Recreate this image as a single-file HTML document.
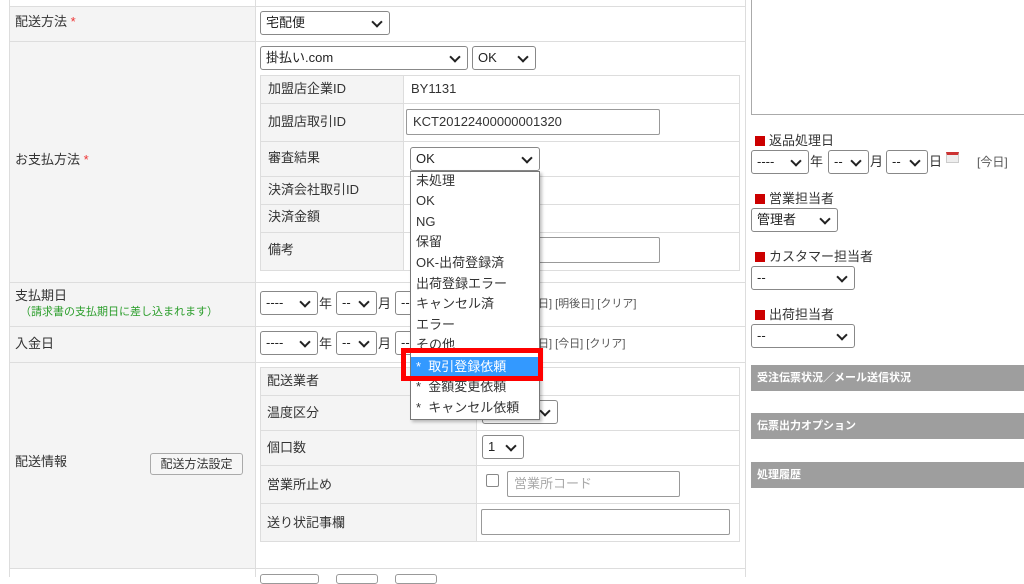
<!DOCTYPE html>
<html><head><meta charset="utf-8"><style>
*{box-sizing:border-box;margin:0;padding:0}
body{width:1024px;height:577px;overflow:hidden;background:#fff;font-family:"Liberation Sans","Noto Sans CJK JP",sans-serif;font-size:13px;color:#333;position:relative}
.a{position:absolute}
.lab{position:absolute;background:#f4f4f4}
.hl{position:absolute;height:1px;background:#ddd}
.vl{position:absolute;width:1px;background:#ddd}
.t{position:absolute;white-space:nowrap;line-height:16px}
.sel{position:absolute;border:1px solid #888;border-radius:3px;background:#fff;height:24px;line-height:22px;padding-left:5px;font-size:13px;color:#222}
.sel:after{content:"";position:absolute;right:8px;top:6px;width:6px;height:6px;border-right:2px solid #222;border-bottom:2px solid #222;transform:rotate(45deg)}
.inp{position:absolute;border:1px solid #999;border-radius:2px;background:#fff;height:26px;line-height:24px;padding-left:6px}
.req{color:#e33}
.sq{display:inline-block;width:10px;height:10px;background:#c00;margin-right:4px;vertical-align:-1px}
.bar{position:absolute;left:751px;width:273px;height:26px;background:#9e9e9e;color:#fff;font-weight:bold;font-size:11px;line-height:26px;padding-left:6px}
.sm{font-size:11px;color:#555}
.it{position:absolute;left:416px;line-height:16px;white-space:nowrap}
</style></head><body>
<div class="lab" style="left:9px;top:6px;width:246px;height:562px"></div>
<div class="vl" style="left:9px;top:0;height:577px"></div>
<div class="vl" style="left:255px;top:0;height:577px"></div>
<div class="vl" style="left:745px;top:0;height:577px"></div>
<div class="hl" style="left:9px;top:6px;width:736px"></div>
<div class="hl" style="left:9px;top:41px;width:736px"></div>
<div class="hl" style="left:9px;top:282px;width:736px"></div>
<div class="hl" style="left:9px;top:326px;width:736px"></div>
<div class="hl" style="left:9px;top:362px;width:736px"></div>
<div class="hl" style="left:9px;top:568px;width:736px"></div>

<div class="t" style="left:15px;top:14px">配送方法 <span class="req">*</span></div>
<div class="sel" style="left:260px;top:11px;width:130px">宅配便</div>

<div class="t" style="left:15px;top:152px">お支払方法 <span class="req">*</span></div>
<div class="sel" style="left:260px;top:46px;width:208px">掛払い.com</div>
<div class="sel" style="left:472px;top:46px;width:64px">OK</div>

<div class="lab" style="left:260px;top:75px;width:143px;height:195px"></div>
<div class="a" style="left:260px;top:75px;width:480px;height:196px;border:1px solid #ddd"></div>
<div class="vl" style="left:403px;top:75px;height:196px"></div>
<div class="hl" style="left:260px;top:103px;width:480px"></div>
<div class="hl" style="left:260px;top:141px;width:480px"></div>
<div class="hl" style="left:260px;top:176px;width:480px"></div>
<div class="hl" style="left:260px;top:204px;width:480px"></div>
<div class="hl" style="left:260px;top:232px;width:480px"></div>
<div class="t" style="left:268px;top:81px">加盟店企業ID</div>
<div class="t" style="left:411px;top:81px">BY1131</div>
<div class="t" style="left:268px;top:114px">加盟店取引ID</div>
<div class="inp" style="left:406px;top:109px;width:254px">KCT20122400000001320</div>
<div class="t" style="left:268px;top:150px">審査結果</div>
<div class="sel" style="left:410px;top:147px;width:130px">OK</div>
<div class="t" style="left:268px;top:182px">決済会社取引ID</div>
<div class="t" style="left:268px;top:209px">決済金額</div>
<div class="t" style="left:268px;top:242px">備考</div>
<div class="inp" style="left:520px;top:237px;width:140px"></div>

<div class="t" style="left:15px;top:288px">支払期日</div>
<div class="t" style="left:20px;top:304px;font-size:11px;color:#2a9d2a">（請求書の支払期日に差し込まれます）</div>
<div class="sel" style="left:260px;top:291px;width:58px">----</div><div class="t" style="left:319px;top:296px">年</div>
<div class="sel" style="left:336px;top:291px;width:41px">--</div><div class="t" style="left:378px;top:296px">月</div>
<div class="sel" style="left:395px;top:291px;width:41px">--</div>
<div class="t sm" style="left:538px;top:296px">日] [明後日] [クリア]</div>

<div class="t" style="left:15px;top:336px">入金日</div>
<div class="sel" style="left:260px;top:331px;width:58px">----</div><div class="t" style="left:319px;top:336px">年</div>
<div class="sel" style="left:336px;top:331px;width:41px">--</div><div class="t" style="left:378px;top:336px">月</div>
<div class="sel" style="left:395px;top:331px;width:41px">--</div>
<div class="t sm" style="left:538px;top:336px">日] [今日] [クリア]</div>

<div class="t" style="left:15px;top:454px">配送情報</div>
<div class="a" style="left:150px;top:453px;width:93px;height:22px;border:1px solid #aaa;border-radius:3px;background:#f6f6f6;font-size:12px;line-height:20px;text-align:center">配送方法設定</div>

<div class="lab" style="left:260px;top:367px;width:216px;height:174px"></div>
<div class="a" style="left:260px;top:367px;width:480px;height:175px;border:1px solid #ddd"></div>
<div class="vl" style="left:476px;top:367px;height:175px"></div>
<div class="hl" style="left:260px;top:395px;width:480px"></div>
<div class="hl" style="left:260px;top:430px;width:480px"></div>
<div class="hl" style="left:260px;top:465px;width:480px"></div>
<div class="hl" style="left:260px;top:503px;width:480px"></div>
<div class="t" style="left:267px;top:373px">配送業者</div>
<div class="t" style="left:267px;top:405px">温度区分</div>
<div class="sel" style="left:482px;top:400px;width:76px"></div>
<div class="t" style="left:267px;top:440px">個口数</div>
<div class="sel" style="left:482px;top:435px;width:42px">1</div>
<div class="t" style="left:267px;top:477px">営業所止め</div>
<div class="a" style="left:486px;top:474px;width:13px;height:13px;border:1px solid #888;border-radius:2px"></div>
<div class="inp" style="left:507px;top:471px;width:173px;color:#aaa">営業所コード</div>
<div class="t" style="left:267px;top:515px">送り状記事欄</div>
<div class="inp" style="left:481px;top:509px;width:249px"></div>
<div class="a" style="left:260px;top:574px;width:59px;height:10px;border:1px solid #999;border-radius:3px"></div>
<div class="a" style="left:336px;top:574px;width:42px;height:10px;border:1px solid #999;border-radius:3px"></div>
<div class="a" style="left:395px;top:574px;width:42px;height:10px;border:1px solid #999;border-radius:3px"></div>

<div class="a" style="left:410px;top:171px;width:130px;height:249px;background:#fff;border:1px solid #777;box-shadow:2px 2px 3px rgba(0,0,0,.25)"></div>
<div class="it" style="top:173px">未処理</div>
<div class="it" style="top:193px">OK</div>
<div class="it" style="top:214px">NG</div>
<div class="it" style="top:234px">保留</div>
<div class="it" style="top:255px">OK-出荷登録済</div>
<div class="it" style="top:276px">出荷登録エラー</div>
<div class="it" style="top:296px">キャンセル済</div>
<div class="it" style="top:317px">エラー</div>
<div class="it" style="top:337px">その他</div>
<div class="a" style="left:411px;top:357px;width:128px;height:20px;background:#3399ff"></div>
<div class="it" style="top:359px;color:#fff">*&nbsp; 取引登録依頼</div>
<div class="it" style="top:379px">*&nbsp; 金額変更依頼</div>
<div class="it" style="top:400px">*&nbsp; キャンセル依頼</div>
<div class="a" style="left:401px;top:348px;width:142px;height:33px;border:5px solid #f00"></div>

<div class="a" style="left:751px;top:-2px;width:280px;height:117px;border:1px solid #aaa"></div>
<div class="t" style="left:755px;top:133px"><span class="sq"></span>返品処理日</div>
<div class="sel" style="left:751px;top:150px;width:58px">----</div><div class="t" style="left:810px;top:154px">年</div>
<div class="sel" style="left:828px;top:150px;width:41px">--</div><div class="t" style="left:870px;top:154px">月</div>
<div class="sel" style="left:886px;top:150px;width:42px">--</div><div class="t" style="left:929px;top:154px">日</div>
<div class="a" style="left:946px;top:152px;width:13px;height:11px;background:#eee;border:1px solid #ccc;border-top:3px solid #c33"></div>
<div class="t sm" style="left:977px;top:154px;font-size:12px">[今日]</div>
<div class="t" style="left:755px;top:191px"><span class="sq"></span>営業担当者</div>
<div class="sel" style="left:751px;top:208px;width:87px">管理者</div>
<div class="t" style="left:755px;top:249px"><span class="sq"></span>カスタマー担当者</div>
<div class="sel" style="left:751px;top:266px;width:104px">--</div>
<div class="t" style="left:755px;top:307px"><span class="sq"></span>出荷担当者</div>
<div class="sel" style="left:751px;top:324px;width:104px">--</div>
<div class="bar" style="top:365px">受注伝票状況／メール送信状況</div>
<div class="bar" style="top:413px">伝票出力オプション</div>
<div class="bar" style="top:462px">処理履歴</div>
</body></html>
